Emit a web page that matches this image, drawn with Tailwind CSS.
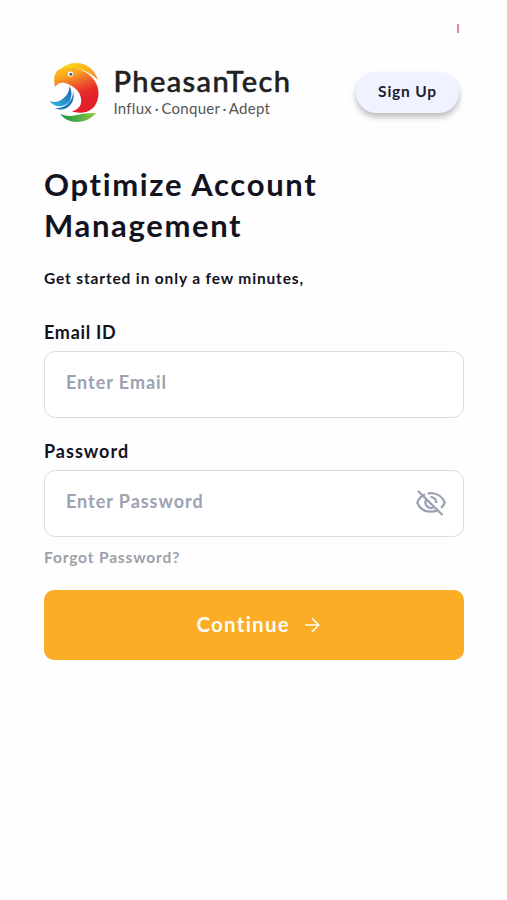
<!DOCTYPE html>
<html lang="en">
<head>
<meta charset="utf-8">
<title>PheasanTech</title>
<script src="https://cdn.jsdelivr.net/npm/@tailwindcss/browser@4"></script>
</head>
<body class="bg-white font-['Lato','Open_Sans',sans-serif] text-[#12131f]">
<main class="relative mx-auto h-[900px] w-[507px] overflow-hidden bg-[#fefefe] pl-[44px] pr-[43px] pt-[62px]">
  <span class="absolute left-[457px] top-[24px] h-[9px] w-[2px] bg-[#dc8b95]"></span>
  <header class="flex h-[61px] items-start">
    <svg class="ml-[5px] h-[60px] w-[53px] shrink-0" viewBox="0 0 53 60" fill="none">
      <defs>
        <linearGradient id="head" x1="14" y1="2" x2="30" y2="48" gradientUnits="userSpaceOnUse"><stop stop-color="#fbcf1d"/><stop offset=".25" stop-color="#f9a522"/><stop offset=".5" stop-color="#f0562a"/><stop offset=".7" stop-color="#e62829"/><stop offset="1" stop-color="#e21f2a"/></linearGradient>
        <linearGradient id="crest" x1="14" y1="3" x2="50" y2="20" gradientUnits="userSpaceOnUse"><stop stop-color="#fbd91c"/><stop offset=".6" stop-color="#f9b21e"/><stop offset="1" stop-color="#f07a28"/></linearGradient>
        <linearGradient id="wing" x1="4" y1="46" x2="23" y2="26" gradientUnits="userSpaceOnUse"><stop stop-color="#38b7e6"/><stop offset="1" stop-color="#1265ae"/></linearGradient>
        <linearGradient id="leaf" x1="11" y1="54" x2="45" y2="49" gradientUnits="userSpaceOnUse"><stop stop-color="#159447"/><stop offset="1" stop-color="#8cc63f"/></linearGradient>
      </defs>
      <path d="M9 9C14 4 20 1 27 1c11 0 19 7 22 17-5-5-10-8-16-10-8-2-16-1-24 1Z" fill="url(#crest)"/>
      <path d="M6.500 25C4 18 5 12 9 8c8-4 18-2 24 .500 10 4 17 13 16.500 24C49 42 43 50 34 50.500c-4 .5-8 0-11-1 7-2 10-7 9-13-1-7-6-11-12-14-6-3-12-2-13.500 2.500Z" fill="url(#head)"/>
      <path d="M20.500 24c4.500 9 1 18-7.500 20-5 1-10-1-12.500-5 5 2 9 1 13-2 4-3 7-7 7-13Z" fill="url(#wing)"/>
      <path d="M24 29c2.500 9-2 17-11 18.500-3 .3-5-.5-7-1.500 7 0 11-2 14-6 3-3 4-6 4-11Z" fill="#1f79be"/>
      <path d="M11 52c8 3 14 2 21 0 6-1 10-1 15-1-4 5-11 9-19 9-7 0-13-3-17-8Z" fill="url(#leaf)"/>
      <circle cx="21.500" cy="12" r="2.600" fill="#fff"/><circle cx="21.800" cy="12.300" r="1.400" fill="#24506b"/>
    </svg>
    <div class="ml-[11.5px] w-[200px] whitespace-nowrap pt-[2px]">
      <div class="text-[29px] font-medium leading-[34px] tracking-[1.4px] text-[#202020] [-webkit-text-stroke:0.5px_#202020]">PheasanTech</div>
      <div class="text-[15px] leading-[20px] tracking-[0.25px] text-[#555] [word-spacing:-1.4px]">Influx · Conquer · Adept</div>
    </div>
    <button class="ml-auto mr-[5px] mt-[10px] h-[41px] w-[103px] rounded-full bg-[#eff3ff] pb-[1px] text-[15.5px] font-bold tracking-[0.8px] text-[#1b2030] shadow-[0_4px_6px_rgba(0,0,0,0.27)]">Sign Up</button>
  </header>
  <h1 class="mt-[41px] whitespace-nowrap text-[31px] font-bold leading-[41px] tracking-[1.65px]">Optimize Account<br>Management</h1>
  <p class="mt-[22px] whitespace-nowrap text-[15.5px] font-bold leading-[20px] tracking-[0.85px]">Get started in only a few minutes,</p>
  <form class="mt-[32px]">
    <label class="block h-[31px] text-[18px] font-bold leading-[24px] tracking-[0.7px]">Email ID</label>
    <div class="flex h-[67px] items-center rounded-[11px] border-[1.5px] border-[#dcdddf] bg-white pb-[5px] pl-[21px] text-[18px] font-bold tracking-[0.95px] text-[#9ca2b1]"><span>Enter Email</span></div>
    <label class="mt-[21px] block h-[31px] text-[18px] font-bold leading-[24px] tracking-[1px]">Password</label>
    <div class="flex h-[67px] items-center justify-between rounded-[11px] border-[1.5px] border-[#dcdddf] bg-white pl-[21px] pr-[17px] text-[18px] font-bold tracking-[0.95px] text-[#9ca2b1]"><span class="pb-[5px]">Enter Password</span>
      <svg class="mb-[2px] h-[28px] w-[30px]" viewBox="0 0 30 28" fill="none" stroke="#9ca2b1" stroke-width="2.3">
        <path d="M9 5.3C5.5 7 2.6 9.700 1.300 13.500 3.500 19.500 9 22.700 15 22.700c2.200 0 4.300-.4 6.200-1.200M11.700 4.500c1.100-.2 2.200-.3 3.300-.3 6 0 11.500 3.300 13.700 9.300-.8 2.200-2 4-3.700 5.500"/>
        <path d="M10.500 10.500a5.300 5.300 0 0 0 7.500 7.300M14.500 8.200a5.300 5.300 0 0 1 5.800 5.800M2 2l24.500 24"/>
      </svg>
    </div>
    <a class="mt-[10px] block h-[20px] text-[15.5px] font-bold leading-[20px] tracking-[0.85px] text-[#9ca0aa]">Forgot Password?</a>
    <button type="button" class="mt-[23px] flex h-[70px] w-full items-center rounded-[10px] bg-[#fcac25] pl-[152.5px] text-[20.5px] font-bold tracking-[1.25px] text-[#fffdf5]"><span class="w-[107px] pb-[2px] text-left">Continue</span>
      <svg class="h-[16px] w-[16px]" viewBox="0 0 16 16" fill="none" stroke="#fffdf5" stroke-width="1.600"><path d="M1 8h13.500M8 1.300 14.700 8 8 14.700"/></svg>
    </button>
  </form>
</main>
</body>
</html>
